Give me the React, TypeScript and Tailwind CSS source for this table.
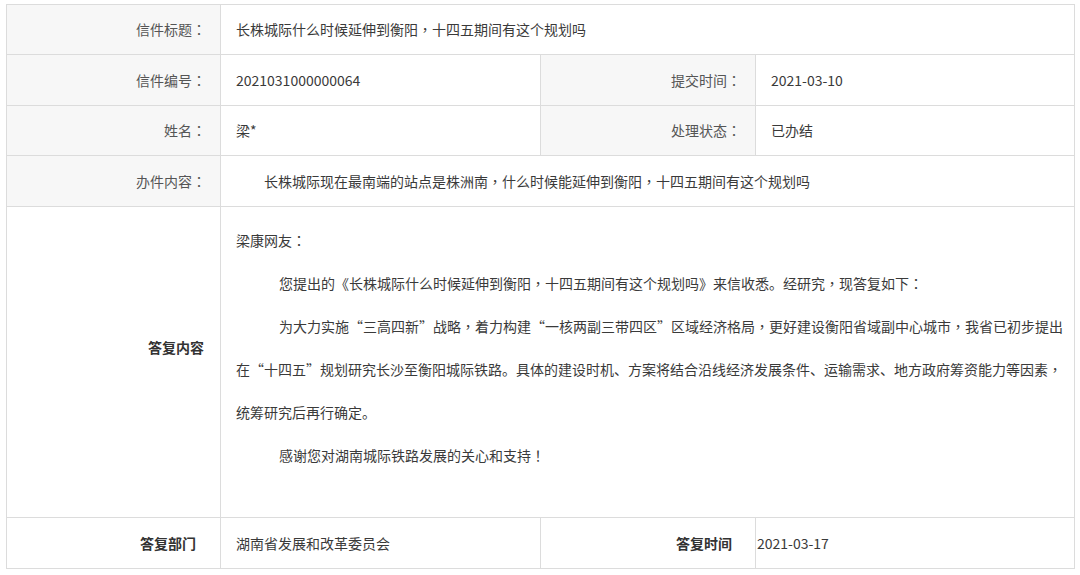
import React from "react";

function T({ children }: { children: string }) {
  const parts: React.ReactNode[] = [];
  let buf = "";
  let k = 0;
  for (const ch of children) {
    if (ch === "，" || ch === "：" || ch === "！") {
      if (buf) parts.push(buf);
      buf = "";
      parts.push(
        <span key={k++} className="font-['Noto_Sans_CJK_TC',sans-serif]">
          {ch}
        </span>
      );
    } else {
      buf += ch;
    }
  }
  if (buf) parts.push(buf);
  return <>{parts}</>;
}

export default function App() {
  const labelGray =
    "w-[214px] shrink-0 border-r border-[#dcdcdc] bg-[#f7f7f7] flex items-center justify-end pr-[14px] text-[#555]";
  return (
    <div className="w-[1080px] h-[575px] bg-white pt-[4px] pl-[6px] font-['Noto_Sans_CJK_SC',sans-serif] text-[14px] text-[#3a3a3a]">
      <div className="w-[1069px] border border-[#dcdcdc]">
        <div className="flex h-[50px] border-b border-[#dcdcdc]">
          <div className={labelGray}>
            <T>信件标题：</T>
          </div>
          <div className="flex-1 flex items-center pl-[15px]">
            <T>长株城际什么时候延伸到衡阳，十四五期间有这个规划吗</T>
          </div>
        </div>

        <div className="flex h-[51px] border-b border-[#dcdcdc]">
          <div className={labelGray}>
            <T>信件编号：</T>
          </div>
          <div className="w-[320px] shrink-0 border-r border-[#dcdcdc] flex items-center pl-[15px]">
            2021031000000064
          </div>
          <div className="w-[215px] shrink-0 border-r border-[#dcdcdc] bg-[#f7f7f7] flex items-center justify-end pr-[14px] text-[#555]">
            <T>提交时间：</T>
          </div>
          <div className="flex-1 flex items-center pl-[15px]">2021-03-10</div>
        </div>

        <div className="flex h-[50px] border-b border-[#dcdcdc]">
          <div className={labelGray}>
            <T>姓名：</T>
          </div>
          <div className="w-[320px] shrink-0 border-r border-[#dcdcdc] flex items-center pl-[15px]">
            梁*
          </div>
          <div className="w-[215px] shrink-0 border-r border-[#dcdcdc] bg-[#f7f7f7] flex items-center justify-end pr-[14px] text-[#555]">
            <T>处理状态：</T>
          </div>
          <div className="flex-1 flex items-center pl-[15px]">已办结</div>
        </div>

        <div className="flex h-[51px] border-b border-[#dcdcdc]">
          <div className={labelGray}>
            <T>办件内容：</T>
          </div>
          <div className="flex-1 flex items-center pl-[15px]">
            <span className="indent-[28px] block">
              <T>长株城际现在最南端的站点是株洲南，什么时候能延伸到衡阳，十四五期间有这个规划吗</T>
            </span>
          </div>
        </div>

        <div className="flex h-[311px] border-b border-[#dcdcdc]">
          <div className="w-[214px] shrink-0 border-r border-[#dcdcdc] flex justify-end items-start pt-[130px] pr-[16px] leading-[20px] font-bold text-[#333]">
            答复内容
          </div>
          <div className="flex-1 pl-[15px] pt-[12px] leading-[43px] whitespace-nowrap">
            <p>
              <T>梁康网友：</T>
            </p>
            <p className="indent-[43px]">
              <T>
                您提出的《长株城际什么时候延伸到衡阳，十四五期间有这个规划吗》来信收悉。经研究，现答复如下：
              </T>
            </p>
            <p className="indent-[43px]">
              <T>
                为大力实施“三高四新”战略，着力构建“一核两副三带四区”区域经济格局，更好建设衡阳省域副中心城市，我省已初步提出
              </T>
              <br />
              <T>
                在“十四五”规划研究长沙至衡阳城际铁路。具体的建设时机、方案将结合沿线经济发展条件、运输需求、地方政府筹资能力等因素，
              </T>
              <br />
              统筹研究后再行确定。
            </p>
            <p className="indent-[43px]">
              <T>感谢您对湖南城际铁路发展的关心和支持！</T>
            </p>
          </div>
        </div>

        <div className="flex h-[50px]">
          <div className="w-[214px] shrink-0 border-r border-[#dcdcdc] flex items-center justify-end pr-[24px] font-bold text-[#333]">
            答复部门
          </div>
          <div className="w-[320px] shrink-0 border-r border-[#dcdcdc] flex items-center pl-[15px]">
            湖南省发展和改革委员会
          </div>
          <div className="w-[215px] shrink-0 border-r border-[#dcdcdc] flex items-center justify-end pr-[23px] font-bold text-[#333]">
            答复时间
          </div>
          <div className="flex-1 flex items-center pl-[1px]">2021-03-17</div>
        </div>
      </div>
    </div>
  );
}
